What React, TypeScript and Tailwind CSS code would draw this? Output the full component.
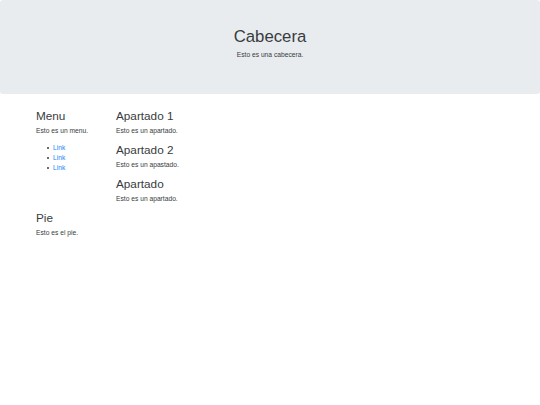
import React from 'react';

const Section = ({ title, text }: { title: string; text: string }) => (
  <div>
    <h3 className="text-[11.75px] leading-[1.2] font-normal mb-[3.4px]">{title}</h3>
    <p className="text-[6.7px] leading-[1.45] mb-[6.7px]">{text}</p>
  </div>
);

export default function App() {
  return (
    <div
      className="min-h-[405px] w-[540px] bg-white text-[#383c40]"
      style={{ fontFamily: '"Liberation Sans", Arial, sans-serif' }}
    >
      {/* Cabecera */}
      <header className="h-[94px] bg-[#e9ecef] rounded-[3px] pt-[27px] flex flex-col items-center">
        <h1 className="text-[16.75px] leading-[1.2] font-normal mb-[3.4px]">Cabecera</h1>
        <p className="text-[6.7px] leading-[1.45]">Esto es una cabecera.</p>
      </header>

      <div className="pl-[36px] pt-[15px]">
        <div className="flex">
          <aside className="w-[80px] shrink-0">
            <Section title="Menu" text="Esto es un menu." />
            <ul className="pl-[11px] text-[6.7px] leading-[1.48]">
              {[0, 1, 2].map((i) => (
                <li key={i} className="flex items-center">
                  <span className="w-[2px] h-[2px] rounded-full bg-[#383c40] mr-[4px]" />
                  <a href="#" className="text-[#1a85f5]">Link</a>
                </li>
              ))}
            </ul>
          </aside>
          <main className="flex-1">
            <Section title="Apartado 1" text="Esto es un apartado." />
            <Section title="Apartado 2" text="Esto es un apastado." />
            <Section title="Apartado" text="Esto es un apartado." />
          </main>
        </div>
        <footer>
          <Section title="Pie" text="Esto es el pie." />
        </footer>
      </div>
    </div>
  );
}
